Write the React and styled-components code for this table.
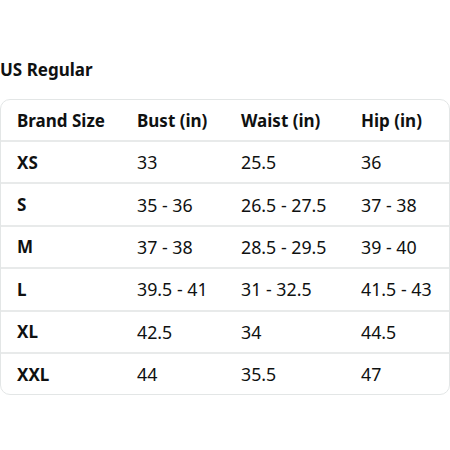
import React from "react";
import styled, { createGlobalStyle } from "styled-components";

const Global = createGlobalStyle`
  html, body { margin: 0; padding: 0; background: #fff; }
  body { font-family: "Noto Sans", "Liberation Sans", sans-serif; color: #0f1111; }
`;

const Page = styled.div`
  width: 450px;
  height: 450px;
  padding-top: 58px;
  box-sizing: border-box;
`;

const Title = styled.h2`
  margin: 0;
  height: 41px;
  font-size: 17px;
  font-weight: 700;
  line-height: 24px;
`;

const Table = styled.div`
  width: 450px;
  box-sizing: border-box;
  border: 1px solid #e3e6e6;
  border-radius: 10px;
  overflow: hidden;
`;

const Row = styled.div`
  display: grid;
  grid-template-columns: 120px 104px 120px 1fr;
  align-items: center;
  height: ${(p) => (p.$header ? "40px" : "40.4px")};
  border-top: ${(p) => (p.$header ? "none" : "2px solid #e8eaea")};
  box-sizing: content-box;
`;

const Cell = styled.div`
  padding-left: 16px;
  font-size: ${(p) => (p.$bold ? "17px" : "17.8px")};
  font-weight: ${(p) => (p.$bold ? 700 : 400)};
  white-space: nowrap;
`;

const rows = [
  ["XS", "33", "25.5", "36"],
  ["S", "35 - 36", "26.5 - 27.5", "37 - 38"],
  ["M", "37 - 38", "28.5 - 29.5", "39 - 40"],
  ["L", "39.5 - 41", "31 - 32.5", "41.5 - 43"],
  ["XL", "42.5", "34", "44.5"],
  ["XXL", "44", "35.5", "47"],
];

export default function App() {
  return (
    <Page>
      <Global />
      <Title>US Regular</Title>
      <Table>
        <Row $header>
          <Cell $bold>Brand Size</Cell>
          <Cell $bold>Bust (in)</Cell>
          <Cell $bold>Waist (in)</Cell>
          <Cell $bold>Hip (in)</Cell>
        </Row>
        {rows.map((r) => (
          <Row key={r[0]}>
            <Cell $bold>{r[0]}</Cell>
            <Cell>{r[1]}</Cell>
            <Cell>{r[2]}</Cell>
            <Cell>{r[3]}</Cell>
          </Row>
        ))}
      </Table>
    </Page>
  );
}
